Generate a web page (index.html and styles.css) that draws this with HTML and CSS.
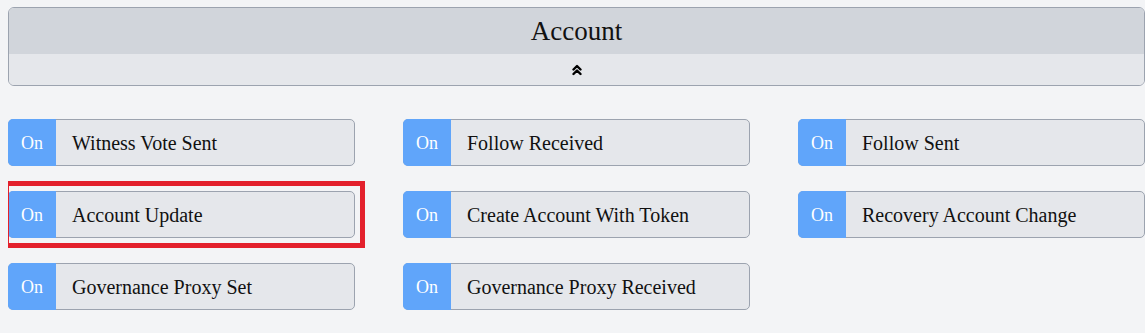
FILE: index.html
```html
<!DOCTYPE html>
<html lang="en">
<head>
    <meta charset="UTF-8">
    <title>Account Notifications</title>
    <link rel="stylesheet" href="styles.css">
</head>
<body>

    <div class="container">
        <!-- Section header -->
        <div class="section-header">
            <div class="section-title">Account</div>
            <div class="section-toggle">
                <svg width="10" height="12" viewBox="0 0 10 12">
                    <path d="M1.5 5.5 L5 2 L8.5 5.5 M1.5 10 L5 6.5 L8.5 10" fill="none" stroke="#000" stroke-width="2.4" stroke-linecap="round" stroke-linejoin="round"/>
                </svg>
            </div>
        </div>

        <!-- Toggles -->
        <div class="toggle-grid">
            <div class="toggle"><span class="toggle-state">On</span><span class="toggle-label">Witness Vote Sent</span></div>
            <div class="toggle"><span class="toggle-state">On</span><span class="toggle-label">Follow Received</span></div>
            <div class="toggle"><span class="toggle-state">On</span><span class="toggle-label">Follow Sent</span></div>
            <div class="toggle highlighted"><span class="toggle-state">On</span><span class="toggle-label">Account Update</span></div>
            <div class="toggle"><span class="toggle-state">On</span><span class="toggle-label">Create Account With Token</span></div>
            <div class="toggle"><span class="toggle-state">On</span><span class="toggle-label">Recovery Account Change</span></div>
            <div class="toggle"><span class="toggle-state">On</span><span class="toggle-label">Governance Proxy Set</span></div>
            <div class="toggle"><span class="toggle-state">On</span><span class="toggle-label">Governance Proxy Received</span></div>
        </div>
    </div>

</body>
</html>
```

FILE: styles.css
```css
body {
    font-family: "Liberation Serif", "Times New Roman", serif;
    background-color: #f3f4f6;
    margin: 7px 0 0 8px;
    padding: 0;
    color: #111;
}

.container {
    width: 1137px;
}

.section-header {
    border: 1px solid #9ca3af;
    border-radius: 6px;
    overflow: hidden;
}

.section-title {
    background-color: #d1d5db;
    height: 46px;
    display: flex;
    align-items: center;
    justify-content: center;
    font-size: 27px;
    padding-top: 1px;
    box-sizing: border-box;
}

.section-toggle {
    background-color: #e5e7eb;
    height: 31px;
    display: flex;
    align-items: center;
    justify-content: center;
    padding-left: 1px;
}

.toggle-grid {
    display: grid;
    grid-template-columns: repeat(3, 347px);
    grid-auto-rows: 47px;
    column-gap: 48px;
    row-gap: 25px;
    margin-top: 33px;
}

.toggle {
    position: relative;
    display: flex;
    background-color: #e5e7eb;
    border: 1px solid #9ca3af;
    border-radius: 5px;
    box-sizing: border-box;
}

.toggle-state {
    width: 48px;
    margin: -1px 0 -1px -1px;
    padding-top: 1px;
    box-sizing: border-box;
    background-color: #60a5fa;
    border-radius: 5px 0 0 5px;
    color: #fff;
    font-size: 18px;
    display: flex;
    align-items: center;
    justify-content: center;
}

.toggle-label {
    display: flex;
    align-items: center;
    padding: 2px 0 0 16px;
    font-size: 20px;
}

.highlighted::after {
    content: "";
    position: absolute;
    left: -5px;
    top: -11px;
    width: 351px;
    height: 57px;
    border: 5px solid #e3202c;
}
```
